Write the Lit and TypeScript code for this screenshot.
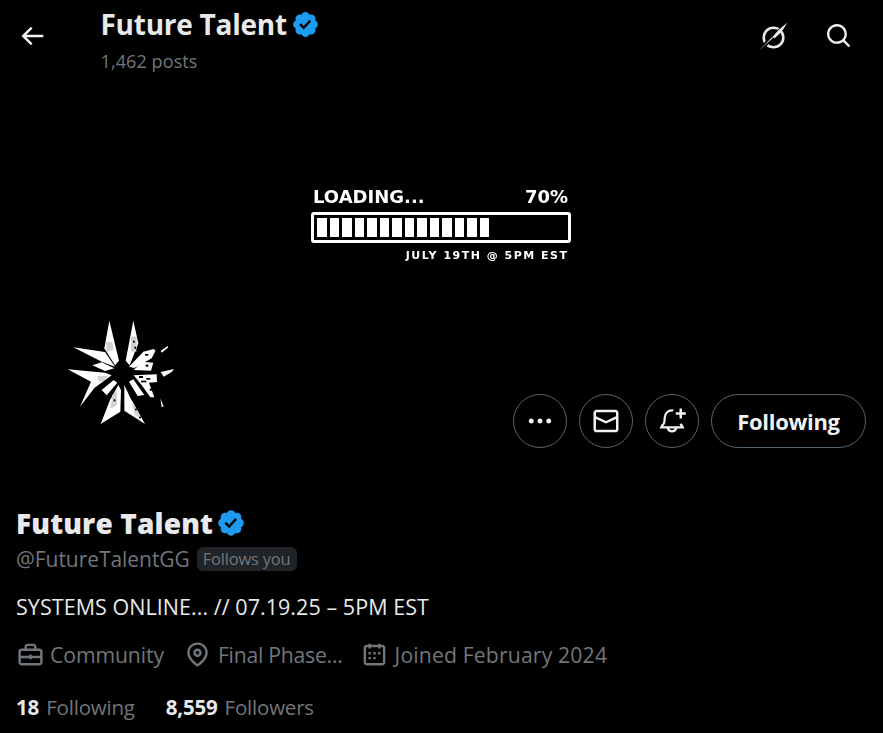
import { LitElement, html, css, svg } from "lit";
import { customElement } from "lit/decorators.js";

const BADGE = "M22.25 12c0-1.43-.88-2.67-2.19-3.34.46-1.39.2-2.9-.81-3.91s-2.52-1.27-3.91-.81c-.66-1.31-1.91-2.19-3.34-2.19s-2.67.88-3.33 2.19c-1.4-.46-2.91-.2-3.92.81s-1.26 2.52-.8 3.91c-1.31.67-2.2 1.91-2.2 3.34s.89 2.67 2.2 3.34c-.46 1.39-.21 2.9.8 3.91s2.52 1.26 3.91.81c.67 1.31 1.91 2.19 3.34 2.19s2.68-.88 3.34-2.19c1.39.45 2.9.2 3.91-.81s1.27-2.52.81-3.91c1.31-.67 2.19-1.91 2.19-3.34zm-11.71 4.2L6.8 12.46l1.41-1.42 2.26 2.26 4.8-5.23 1.47 1.36-6.2 6.77z";
const BACK = "M7.414 13l5.043 5.04-1.414 1.42L3.586 12l7.457-7.46 1.414 1.42L7.414 11H21v2H7.414z";
const SEARCH = "M10.25 3.75c-3.59 0-6.5 2.91-6.5 6.5s2.91 6.5 6.5 6.5c1.795 0 3.419-.726 4.596-1.904 1.178-1.177 1.904-2.801 1.904-4.596 0-3.59-2.91-6.5-6.5-6.5zm-8.5 6.5c0-4.694 3.806-8.5 8.5-8.5s8.5 3.806 8.5 8.5c0 1.986-.682 3.815-1.824 5.262l4.781 4.781-1.414 1.414-4.781-4.781c-1.447 1.142-3.276 1.824-5.262 1.824-4.694 0-8.5-3.806-8.5-8.5z";
const MORE = "M3 12c0-1.1.9-2 2-2s2 .9 2 2-.9 2-2 2-2-.9-2-2zm9 2c1.1 0 2-.9 2-2s-.9-2-2-2-2 .9-2 2 .9 2 2 2zm7 0c1.1 0 2-.9 2-2s-.9-2-2-2-2 .9-2 2 .9 2 2 2z";
const MAIL = "M1.998 5.5c0-1.381 1.119-2.5 2.5-2.5h15c1.381 0 2.5 1.119 2.5 2.5v13c0 1.381-1.119 2.5-2.5 2.5h-15c-1.381 0-2.5-1.119-2.5-2.5v-13zm2.5-.5c-.276 0-.5.224-.5.5v2.764l8 3.638 8-3.636V5.5c0-.276-.224-.5-.5-.5h-15zm15.5 5.463l-8 3.636-8-3.638V18.5c0 .276.224.5.5.5h15c.276 0 .5-.224.5-.5v-8.037z";
const BRIEF = "M7 5.5C7 4.119 8.119 3 9.5 3h5C15.881 3 17 4.119 17 5.5V7h2.5C20.881 7 22 8.119 22 9.5v9c0 1.381-1.119 2.5-2.5 2.5h-15C3.119 21 2 19.881 2 18.5v-9C2 8.119 3.119 7 4.5 7H7V5.5zM9 7h6V5.5c0-.276-.224-.5-.5-.5h-5c-.276 0-.5.224-.5.5V7zM4.5 9c-.276 0-.5.224-.5.5V13h7v-1h2v1h7V9.5c0-.276-.224-.5-.5-.5h-15zM20 15h-7v1h-2v-1H4v3.5c0 .276.224.5.5.5h15c.276 0 .5-.224.5-.5V15z";
const PIN = "M12 7c-1.93 0-3.5 1.57-3.5 3.5S10.07 14 12 14s3.5-1.57 3.5-3.5S13.93 7 12 7zm0 5c-.827 0-1.5-.673-1.5-1.5S11.173 9 12 9s1.5.673 1.5 1.5S12.827 12 12 12zm0-10c-4.687 0-8.5 3.813-8.5 8.5 0 5.967 7.621 11.116 7.945 11.332l.555.37.555-.37c.324-.216 7.945-5.365 7.945-11.332C20.5 5.813 16.687 2 12 2zm0 17.77c-1.665-1.241-6.5-5.196-6.5-9.27C5.5 6.916 8.416 4 12 4s6.5 2.916 6.5 6.5c0 4.073-4.835 8.028-6.5 9.27z";
const CAL = "M7 4V3h2v1h6V3h2v1h1.5C19.89 4 21 5.12 21 6.5v12c0 1.38-1.11 2.5-2.5 2.5h-13C4.12 21 3 19.88 3 18.5v-12C3 5.12 4.12 4 5.5 4H7zm0 2H5.5c-.27 0-.5.22-.5.5v12c0 .28.23.5.5.5h13c.28 0 .5-.22.5-.5v-12c0-.28-.22-.5-.5-.5H17v1h-2V6H9v1H7V6zm0 6h2v-2H7v2zm0 4h2v-2H7v2zm4-4h2v-2h-2v2zm0 4h2v-2h-2v2zm4-4h2v-2h-2v2z";

const icon = (d: string, cls: string) => html`<svg class=${cls} viewBox="0 0 24 24" aria-hidden="true"><path d=${d}></path></svg>`;

const STAR_WHITE = [
  "163,32 192,152 180,166 148,115",
  "235,32 250,100 224,166 212,152",
  "55,112 150,126 180,170 142,156",
  "112,166 140,157 178,175 150,183",
  "38,178 150,188 170,196 118,234 75,290 108,215",
  "140,240 176,210 187,218 155,256",
  "137,342 165,270 190,225 198,240 196,305",
  "208,225 225,262 270,342 208,302",
  "222,215 235,208 268,255 248,258",
  "222,170 265,125 305,115 290,145 238,174",
  "236,180 262,155 295,158 288,182",
  "236,196 305,193 306,216 282,218 298,262 286,262 262,228",
  "317,122 340,107 338,114 320,128",
  "317,186 357,177 350,186 326,200",
  "316,265 326,290 320,291",
];
const STAR_GREY = [
  "152,96 172,96 176,120 156,124",
  "228,80 245,80 244,125 228,125",
  "128,198 160,198 146,214 130,214",
  "172,256 186,240 186,285 166,296",
  "230,280 246,298 258,325 240,316",
];
const STAR_CUT = [
  [252, 198, 12, 6], [274, 204, 12, 5], [258, 212, 16, 5], [284, 236, 8, 6],
  [272, 164, 8, 6], [270, 132, 10, 5], [234, 92, 5, 6], [238, 110, 5, 6],
  [176, 268, 5, 6], [240, 296, 6, 5], [252, 320, 6, 5], [298, 114, 6, 7],
];

@customElement("app-root")
export class AppRoot extends LitElement {
  static styles = css`
    :host {
      display: block;
      width: 883px;
      height: 733px;
      overflow: hidden;
      background: #000;
      color: #e7e9ea;
      font-family: "Open Sans", "Noto Sans", sans-serif;
      position: relative;
    }
    svg { fill: currentColor; display: block; flex: none; }
    .header {
      display: flex;
      align-items: flex-start;
      height: 76px;
      padding: 0 30px 0 16.5px;
      box-sizing: border-box;
    }
    .back { width: 30px; height: 30px; margin-top: 21px; margin-right: 54px; color: #eff3f4; }
    .head-title { flex: 1; padding-top: 6px; }
    .head-name { display: flex; align-items: center; gap: 4px; font-size: 28px; line-height: 36px; font-weight: 700; letter-spacing: -0.25px; height: 36px; }
    .head-badge { width: 29px; height: 29px; color: #1d9bf0; }
    .head-posts { font-size: 18px; line-height: 24px; color: #71767b; margin-top: 7px; letter-spacing: 0.1px; }
    .head-actions { display: flex; align-items: flex-start; gap: 36px; margin-top: 22px; }
    .compass { width: 30px; height: 30px; color: #e7e9ea; }
    .search { width: 28px; height: 28px; color: #eff3f4; }

    .banner {
      height: 298px;
      display: flex;
      align-items: flex-start;
      justify-content: center;
      padding: 111px 1px 0 0;
      box-sizing: border-box;
    }
    .loader { width: 260px; display: flex; flex-direction: column; font-family: "DejaVu Sans", sans-serif; color: #fff; font-weight: 700; filter: blur(0.3px); }
    .load-top { display: flex; justify-content: space-between; font-size: 18px; line-height: 20px; padding: 0 3px 0 2px; }
    .bar {
      margin-top: 5px;
      height: 31px;
      box-sizing: border-box;
      border: 3px solid #fff;
      border-radius: 3px;
      padding: 3px;
      display: flex;
      gap: 3px;
    }
    .seg { width: 9.5px; background: #fff; }
    .load-date { font-size: 11px; line-height: 14px; margin-top: 6px; text-align: right; padding-right: 2.5px; letter-spacing: 1.5px; white-space: nowrap; }

    .star { position: absolute; left: 55px; top: 310px; width: 130px; height: 125px; filter: blur(0.4px); }
    .star .w { fill: #fff; }
    .star .g { fill: #d2d2d2; }
    .star .c { fill: #000; }

    .actions { display: flex; justify-content: flex-end; gap: 12px; padding: 20px 17px 0 0; height: 74px; box-sizing: border-box; }
    .circle, .follow {
      border: 1px solid #536471;
      box-sizing: border-box;
      height: 54px;
      color: #eff3f4;
      display: flex;
      align-items: center;
      justify-content: center;
    }
    .circle { width: 54px; border-radius: 50%; }
    .circle svg { width: 30px; height: 30px; }
    .follow { width: 155px; border-radius: 27px; font-weight: 700; font-size: 22px; letter-spacing: -0.3px; }

    .info { padding: 0 16px; margin-top: 57px; }
    .name { display: flex; align-items: center; gap: 3px; font-size: 28px; line-height: 36px; font-weight: 800; height: 36px; letter-spacing: 0.15px; }
    .name svg { width: 30px; height: 30px; color: #1d9bf0; }
    .handle-row { display: flex; align-items: center; gap: 7px; margin-top: 3px; height: 30px; }
    .handle { font-size: 21px; color: #71767b; letter-spacing: -0.05px; }
    .pill { font-size: 16.5px; line-height: 24px; padding: 0 6px; border-radius: 6px; background: #202327; color: #71767b; letter-spacing: -0.2px; }
    .bio { font-size: 21.5px; line-height: 28px; margin-top: 19px; color: #e7e9ea; letter-spacing: 0.05px; }
    .meta { display: flex; align-items: center; margin-top: 19px; height: 28px; color: #71767b; font-size: 21.2px; letter-spacing: -0.1px; }
    .meta-item { display: flex; align-items: center; gap: 6px; margin-right: 17px; }
    .meta-item.first { gap: 5px; margin-right: 19px; }
    .final { letter-spacing: -0.25px; }
    .joined { letter-spacing: 0.15px; }
    .meta svg { width: 29px; height: 29px; }
    .stats { display: flex; gap: 31px; margin-top: 25px; font-size: 20.5px; line-height: 28px; color: #71767b; letter-spacing: -0.2px; word-spacing: 2px; }
    .stats b { color: #e7e9ea; font-weight: 700; }
  `;

  render() {
    return html`
      <div class="header">
        ${icon(BACK, "back")}
        <div class="head-title">
          <div class="head-name">Future Talent ${icon(BADGE, "head-badge")}</div>
          <div class="head-posts">1,462 posts</div>
        </div>
        <div class="head-actions">
          <svg class="compass" viewBox="0 0 30 30" aria-hidden="true">
            <circle cx="14.5" cy="15.5" r="9.8" fill="none" stroke="currentColor" stroke-width="2.6"></circle>
            <path d="M29 0.5 L-1 29.5" stroke="#000" stroke-width="4" fill="none"></path>
            <path d="M28.5 0.5 L22.5 10 L15.4 16.6 L13.6 14.8 L20 7.5 Z M14.2 15.8 L0 28.5 L13.2 14.9 Z" fill="currentColor"></path>
          </svg>
          ${icon(SEARCH, "search")}
        </div>
      </div>

      <div class="banner">
        <div class="loader">
          <div class="load-top"><span>LOADING...</span><span>70%</span></div>
          <div class="bar">${Array.from({ length: 14 }, () => html`<div class="seg"></div>`)}</div>
          <div class="load-date">JULY 19TH @ 5PM EST</div>
        </div>
      </div>

      <svg class="star" viewBox="0 0 390 375" aria-hidden="true">
        ${STAR_WHITE.map((p) => svg`<polygon class="w" points=${p}></polygon>`)}
        ${STAR_GREY.map((p) => svg`<polygon class="g" points=${p}></polygon>`)}
        ${STAR_CUT.map(([x, y, w, h]) => svg`<rect class="c" x=${x} y=${y} width=${w} height=${h}></rect>`)}
      </svg>

      <div class="actions">
        <div class="circle">${icon(MORE, "")}</div>
        <div class="circle">${icon(MAIL, "")}</div>
        <div class="circle">
          <svg viewBox="0 0 24 24" aria-hidden="true">
            <path d="M23 5v2h-3v3h-2V7h-3V5h3V2h2v3h3z"></path>
            <path d="M13 3.6C12.7 3.5 12.3 3.5 12 3.5 8.6 3.5 6.4 6 6.2 9.3L5.9 12.6c-.1 1.3-.7 2.3-1.9 3.2l-.5 1.2h17l-.5-1.2c-.5-.4-.9-.9-1.2-1.5" fill="none" stroke="currentColor" stroke-width="1.8"></path>
            <path d="M8.6 17.5c.4 1.6 1.8 2.8 3.4 2.8s3-1.2 3.4-2.8" fill="none" stroke="currentColor" stroke-width="1.8"></path>
          </svg>
        </div>
        <div class="follow">Following</div>
      </div>

      <div class="info">
        <div class="name">Future Talent ${icon(BADGE, "")}</div>
        <div class="handle-row"><span class="handle">@FutureTalentGG</span><span class="pill">Follows you</span></div>
        <div class="bio">SYSTEMS ONLINE... // 07.19.25 – 5PM EST</div>
        <div class="meta">
          <div class="meta-item first">${icon(BRIEF, "")}<span>Community</span></div>
          <div class="meta-item">${icon(PIN, "")}<span class="final">Final Phase...</span></div>
          <div class="meta-item">${icon(CAL, "")}<span class="joined">Joined February 2024</span></div>
        </div>
        <div class="stats">
          <span><b>18</b> Following</span>
          <span><b>8,559</b> Followers</span>
        </div>
      </div>
    `;
  }
}
